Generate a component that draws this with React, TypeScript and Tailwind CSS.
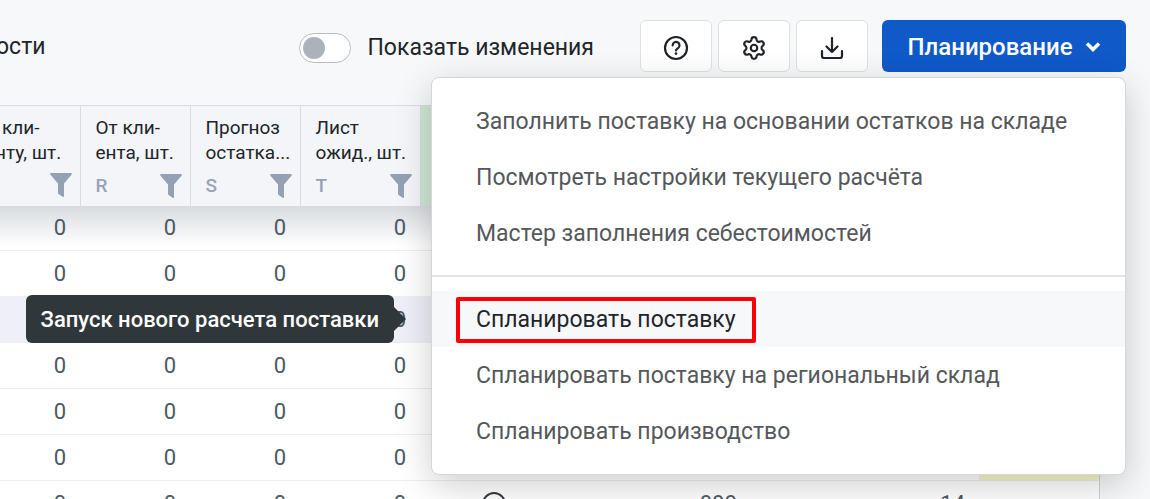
import { useState } from 'react';
import type { ReactNode } from 'react';
import { Settings } from 'lucide-react';

type Column = { title: [string, string]; letter: string };

const columns: Column[] = [
  { title: ['К кли-', 'енту, шт.'], letter: '' },
  { title: ['От кли-', 'ента, шт.'], letter: 'R' },
  { title: ['Прогноз', 'остатка...'], letter: 'S' },
  { title: ['Лист', 'ожид., шт.'], letter: 'T' },
];

const rows = [
  { id: 1, state: 'first' },
  { id: 2, state: 'plain' },
  { id: 3, state: 'selected' },
  { id: 4, state: 'plain' },
  { id: 5, state: 'plain' },
  { id: 6, state: 'warning' },
  { id: 7, state: 'filled' },
];

const ROW_STYLE: Record<string, string> = {
  first: 'h-[45px] bg-linear-to-b from-[#d8dbde] to-white to-90%',
  plain: 'h-[46px] bg-white',
  selected: 'h-[46px] bg-[#eeeff8]',
  warning: 'h-[46px] bg-white',
  filled: 'h-[46px] bg-white',
};

const menuGroups = [
  [
    'Заполнить поставку на основании остатков на складе',
    'Посмотреть настройки текущего расчёта',
    'Мастер заполнения себестоимостей',
  ],
  [
    'Спланировать поставку',
    'Спланировать поставку на региональный склад',
    'Спланировать производство',
  ],
];

const ACTIVE_ITEM = 'Спланировать поставку';

function FunnelIcon() {
  return (
    <svg width="22" height="24" viewBox="0 0 22 24" fill="#94a0b4" aria-hidden="true">
      <path d="M1.2 0h19.6c.9 0 1.3 1 .7 1.700L14 10.600V23c0 .8-.8 1.200-1.400.8l-4-2.800c-.4-.3-.6-.7-.6-1.200v-9.200L.5 1.700C-.1 1 .3 0 1.200 0z" />
    </svg>
  );
}

function HelpIcon() {
  return (
    <svg width="26" height="26" viewBox="0 0 26 26" fill="none" stroke="currentColor" strokeWidth="2.200" strokeLinecap="round" aria-hidden="true">
      <circle cx="13" cy="13" r="11" />
      <path d="M9.700 10.400a3.400 3.400 0 1 1 5.300 2.700c-1.200.8-2 1.200-2 2.300" />
      <circle cx="13" cy="18.600" r="1.300" fill="currentColor" stroke="none" />
    </svg>
  );
}

function DownloadIcon() {
  return (
    <svg width="26" height="26" viewBox="0 0 26 26" fill="none" stroke="currentColor" strokeWidth="2.200" strokeLinecap="round" strokeLinejoin="round" aria-hidden="true">
      <path d="M13 3v14M7.500 11.500L13 17l5.500-5.500" />
      <path d="M3 16v5a2 2 0 0 0 2 2h16a2 2 0 0 0 2-2v-5" />
    </svg>
  );
}

function FaceIcon() {
  return (
    <svg width="24" height="24" viewBox="0 0 24 24" fill="none" stroke="#333b44" strokeWidth="2" strokeLinecap="round" className="mx-auto" aria-hidden="true">
      <circle cx="12" cy="12" r="11" />
      <path d="M7 8h2M15 8h2M8 16c2.500 2 5.500 2 8 0" />
    </svg>
  );
}

function IconButton({ label, children }: { label: string; children: ReactNode }) {
  return (
    <button
      aria-label={label}
      className="flex h-[52px] w-[72px] items-center justify-center rounded-md border border-[#dddfe1] bg-white pt-1 text-[#1f2328]"
    >
      {children}
    </button>
  );
}

function PlanningMenu() {
  return (
    <ul className="absolute top-full right-0 z-10 mt-[5px] w-[695px] rounded-lg border border-[#d5d7d9] bg-white py-[15px] shadow-[0_10px_36px_rgba(0,0,0,0.2)]">
      {menuGroups.map((group, i) => (
        <li key={i} className={i > 0 ? 'mt-3.5 border-t-2 border-[#e1e3e5] pt-3.5' : ''}>
          <ul>
            {group.map(item => {
              const active = item === ACTIVE_ITEM;
              return (
                <li key={item} className="relative">
                  <button
                    className={`flex h-14 w-full items-center pt-0.5 pl-11 text-left text-[23px] whitespace-nowrap ${active ? 'bg-[#f7f8fa] text-[#212529]' : 'text-[#55585b]'}`}
                  >
                    <span className="relative">
                      {item}
                      {active && <span className="absolute -inset-x-5 -inset-y-1.5 rounded-xs border-4 border-[#fb0007]" />}
                    </span>
                  </button>
                  {active && (
                    <div
                      role="tooltip"
                      className="absolute top-1 right-full mr-[38px] flex h-12 items-center rounded-md bg-[#30373b] px-[15px] text-[22px] font-medium whitespace-nowrap text-white"
                    >
                      Запуск нового расчета поставки
                      <svg width="12" height="24" viewBox="0 0 12 24" fill="#30373b" className="absolute left-full" aria-hidden="true">
                        <path d="M0 0l12 12L0 24z" />
                      </svg>
                    </div>
                  )}
                </li>
              );
            })}
          </ul>
        </li>
      ))}
    </ul>
  );
}

export default function App() {
  const [showChanges, setShowChanges] = useState(false);
  const [menuOpen, setMenuOpen] = useState(true);

  return (
    <div className="h-screen overflow-hidden bg-[#f7f8fa] font-[Roboto,sans-serif] text-[#212529]">
      {/* Toolbar */}
      <header className="flex items-center pt-5 pr-6 pb-[33px]">
        <h1 className="-ml-1 pt-0.5 text-[23px]">ости</h1>
        <label className="mr-[46px] ml-auto flex items-center gap-4 pt-1 text-[23px] whitespace-nowrap">
          <input
            type="checkbox"
            checked={showChanges}
            onChange={e => setShowChanges(e.target.checked)}
            className="peer sr-only"
          />
          <span className="flex h-[30px] w-[52px] items-center rounded-full border border-[#b9bdc1] bg-white px-[3px] peer-checked:justify-end">
            <span className="size-[22px] rounded-full bg-[#abb2bb]" />
          </span>
          Показать изменения
        </label>
        <div className="mr-3.5 flex gap-1.5">
          <IconButton label="Помощь"><HelpIcon /></IconButton>
          <IconButton label="Настройки"><Settings size={26} /></IconButton>
          <IconButton label="Скачать"><DownloadIcon /></IconButton>
        </div>
        <div className="relative">
          <button
            onClick={() => setMenuOpen(!menuOpen)}
            aria-expanded={menuOpen}
            className="flex h-[52px] w-[244px] items-center justify-center gap-3 rounded-md bg-[#1059c9] pt-0.5 text-[24px] font-medium text-white"
          >
            Планирование
            <svg width="16" height="12" viewBox="0 0 16 12" fill="none" stroke="currentColor" strokeWidth="3.500" aria-hidden="true">
              <path d="M2 2.500l6 6 6-6" />
            </svg>
          </button>
          {menuOpen && <PlanningMenu />}
        </div>
      </header>

      {/* Table, scrolled to the right */}
      <div className="mr-[50px] -ml-[30px] border-r border-[#cfd3d7]">
        <table className="w-full table-fixed border-collapse">
          <colgroup>
            <col className="w-[110px]" />
            <col className="w-[110px]" />
            <col className="w-[110px]" />
            <col className="w-[120px]" />
            <col className="w-[147px]" />
            <col className="w-[184px]" />
            <col />
            <col className="w-[120px]" />
          </colgroup>
          <thead>
            <tr className="h-[100px] border-t border-[#d9dce0] bg-[#f3f5f9]">
              {columns.map(col => (
                <th key={col.title[1]} className="border-r border-[#d9dce0] pt-[9px] pr-2 pl-[15px] text-left align-top text-[19px] leading-[25px] font-normal whitespace-nowrap">
                  <div>{col.title[0]}</div>
                  <div>{col.title[1]}</div>
                  <div className="mt-2 flex items-center justify-between font-medium text-[#98a2b6]">
                    <span>{col.letter}</span>
                    <FunnelIcon />
                  </div>
                </th>
              ))}
              <th className="bg-[#cfe8d5]" />
              <th className="bg-[#cfe8d5]" />
              <th />
              <th />
            </tr>
          </thead>
          <tbody className="text-right text-[22px] text-[#4b5966]">
            {rows.map(row => (
              <tr key={row.id} className={`border-b border-[#eceff1] ${ROW_STYLE[row.state]}`}>
                {columns.map(col => (
                  <td key={col.title[1]} className="pr-3.5">0</td>
                ))}
                <td>{row.state === 'filled' && <FaceIcon />}</td>
                <td className="pr-3.5">{row.state === 'filled' && '999'}</td>
                <td className="pr-3.5">{row.state === 'filled' && '14'}</td>
                <td className={row.state === 'warning' ? 'bg-[#f7f8c8]' : ''} />
              </tr>
            ))}
          </tbody>
        </table>
      </div>
    </div>
  );
}
